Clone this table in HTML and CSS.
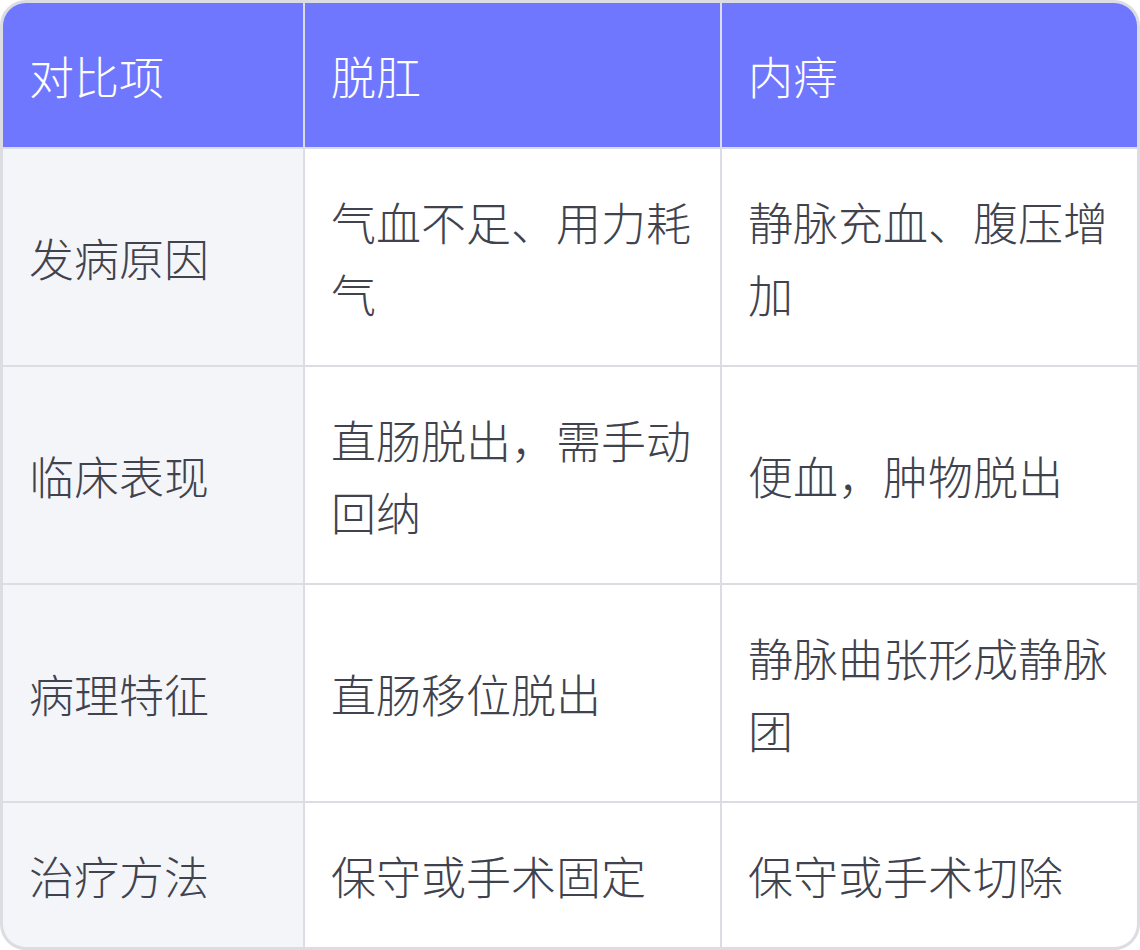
FILE: index.html
```html
<!DOCTYPE html>
<html lang="zh-CN">
<head>
<meta charset="utf-8">
<title>脱肛与内痔对比</title>
<link rel="stylesheet" href="styles.css">
</head>
<body>
<div class="table">
  <div class="cell head">对比项</div>
  <div class="cell head">脱肛</div>
  <div class="cell head">内痔</div>

  <div class="cell label">发病原因</div>
  <div class="cell">气血不足、用力耗气</div>
  <div class="cell">静脉充血、腹压增加</div>

  <div class="cell label">临床表现</div>
  <div class="cell">直肠脱出，需手动回纳</div>
  <div class="cell">便血，肿物脱出</div>

  <div class="cell label">病理特征</div>
  <div class="cell">直肠移位脱出</div>
  <div class="cell">静脉曲张形成静脉团</div>

  <div class="cell label">治疗方法</div>
  <div class="cell">保守或手术固定</div>
  <div class="cell">保守或手术切除</div>
</div>
</body>
</html>
```

FILE: styles.css
```css
html, body {
  margin: 0;
  padding: 0;
  background: #ffffff;
}

body {
  font-family: "Noto Sans CJK SC", "Noto Sans", sans-serif;
}

.table {
  width: 1140px;
  box-sizing: border-box;
  display: grid;
  grid-template-columns: 300px 415px 415px;
  gap: 2px;
  background: #dcdde2;
  border: 3px solid #dcdde2;
  border-radius: 26px;
  overflow: hidden;
}

.cell {
  background: #ffffff;
  color: #40434e;
  font-size: 45px;
  font-weight: 300;
  line-height: 72px;
  padding: 37px 26px 35px;
  display: flex;
  align-items: center;
}

.cell.head {
  background: #7077ff;
  color: #ffffff;
}

.cell.label {
  background: #f4f5f9;
}
```
